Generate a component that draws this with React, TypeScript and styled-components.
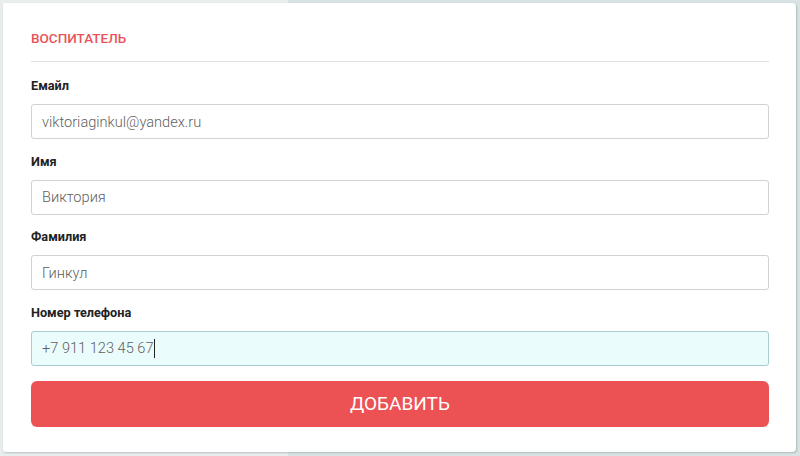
import React from "react";
import styled, { createGlobalStyle } from "styled-components";

const GlobalStyle = createGlobalStyle`
  * {
    box-sizing: border-box;
  }

  body {
    margin: 0;
    background-color: #dde6e6;
    font-family: Roboto, "Noto Sans", sans-serif;
  }
`;

const Page = styled.div`
  height: 456px;
  padding: 3px 4px 4px 2px;
  background: linear-gradient(to right, #e9eded 0, #e9eded 288px, #d9e3e3 288px);
`;

const Card = styled.div`
  height: 100%;
  background-color: #fff;
  border-left: 1px solid #e3e9e9;
  border-radius: 0 4px 4px 4px;
  box-shadow: 1px 1px 2px rgba(90, 110, 110, 0.35);
  padding: 25px 27px 0 28px;
`;

const Title = styled.h3`
  margin: 0;
  padding: 2px 0 15px;
  color: #ea5359;
  font-size: 13.5px;
  font-weight: 500;
  text-transform: uppercase;
  border-bottom: 1px solid #dde3e3;
`;

const Form = styled.form`
  display: flex;
  flex-direction: column;
  padding-top: 17px;
`;

const Field = styled.label`
  display: flex;
  flex-direction: column;
  margin-bottom: 15.67px;
`;

const Label = styled.span`
  color: #222;
  font-size: 12.7px;
  font-weight: 700;
  line-height: 14px;
  margin-bottom: 11px;
`;

const InputWrap = styled.div`
  position: relative;
  display: flex;
  flex-direction: column;
`;

const Input = styled.input<{ $active?: boolean }>`
  height: 35px;
  padding: 0 10px;
  border: 1px solid ${(p) => (p.$active ? "#a7cdd1" : "#cfd3d3")};
  border-radius: 3px;
  background-color: ${(p) => (p.$active ? "#eafcfc" : "#fff")};
  color: #5f5f5f;
  font-family: Roboto, sans-serif;
  font-size: 14.6px;
  font-weight: 300;
  outline: none;
  caret-color: #111;
`;

const CaretLayer = styled.span`
  position: absolute;
  top: 0;
  left: 0;
  height: 35px;
  padding: 0 11px;
  display: flex;
  align-items: center;
  pointer-events: none;
  font-family: Roboto, sans-serif;
  font-size: 14.6px;
  font-weight: 300;
  color: transparent;
  white-space: pre;

  &::after {
    content: "";
    width: 1px;
    height: 19px;
    background-color: #222;
  }
`;

const Button = styled.button`
  height: 46px;
  margin-top: -1px;
  border: none;
  border-radius: 6px;
  background-color: #ec5254;
  color: #fff;
  font-family: Roboto, sans-serif;
  font-size: 19px;
  font-weight: 400;
  text-transform: uppercase;
  cursor: pointer;
`;

const fields = [
  { label: "Емайл", value: "viktoriaginkul@yandex.ru" },
  { label: "Имя", value: "Виктория" },
  { label: "Фамилия", value: "Гинкул" },
  { label: "Номер телефона", value: "+7 911 123 45 67", active: true },
];

const App = () => {
  return (
    <>
      <GlobalStyle />
      <Page>
        <Card>
          <Title>Воспитатель</Title>
          <Form onSubmit={(e) => e.preventDefault()}>
            {fields.map((field, index) => (
              <Field key={index}>
                <Label>{field.label}</Label>
                <InputWrap>
                  <Input defaultValue={field.value} $active={field.active} />
                  {field.active && <CaretLayer>{field.value}</CaretLayer>}
                </InputWrap>
              </Field>
            ))}
            <Button type="submit">Добавить</Button>
          </Form>
        </Card>
      </Page>
    </>
  );
};

export default App;
